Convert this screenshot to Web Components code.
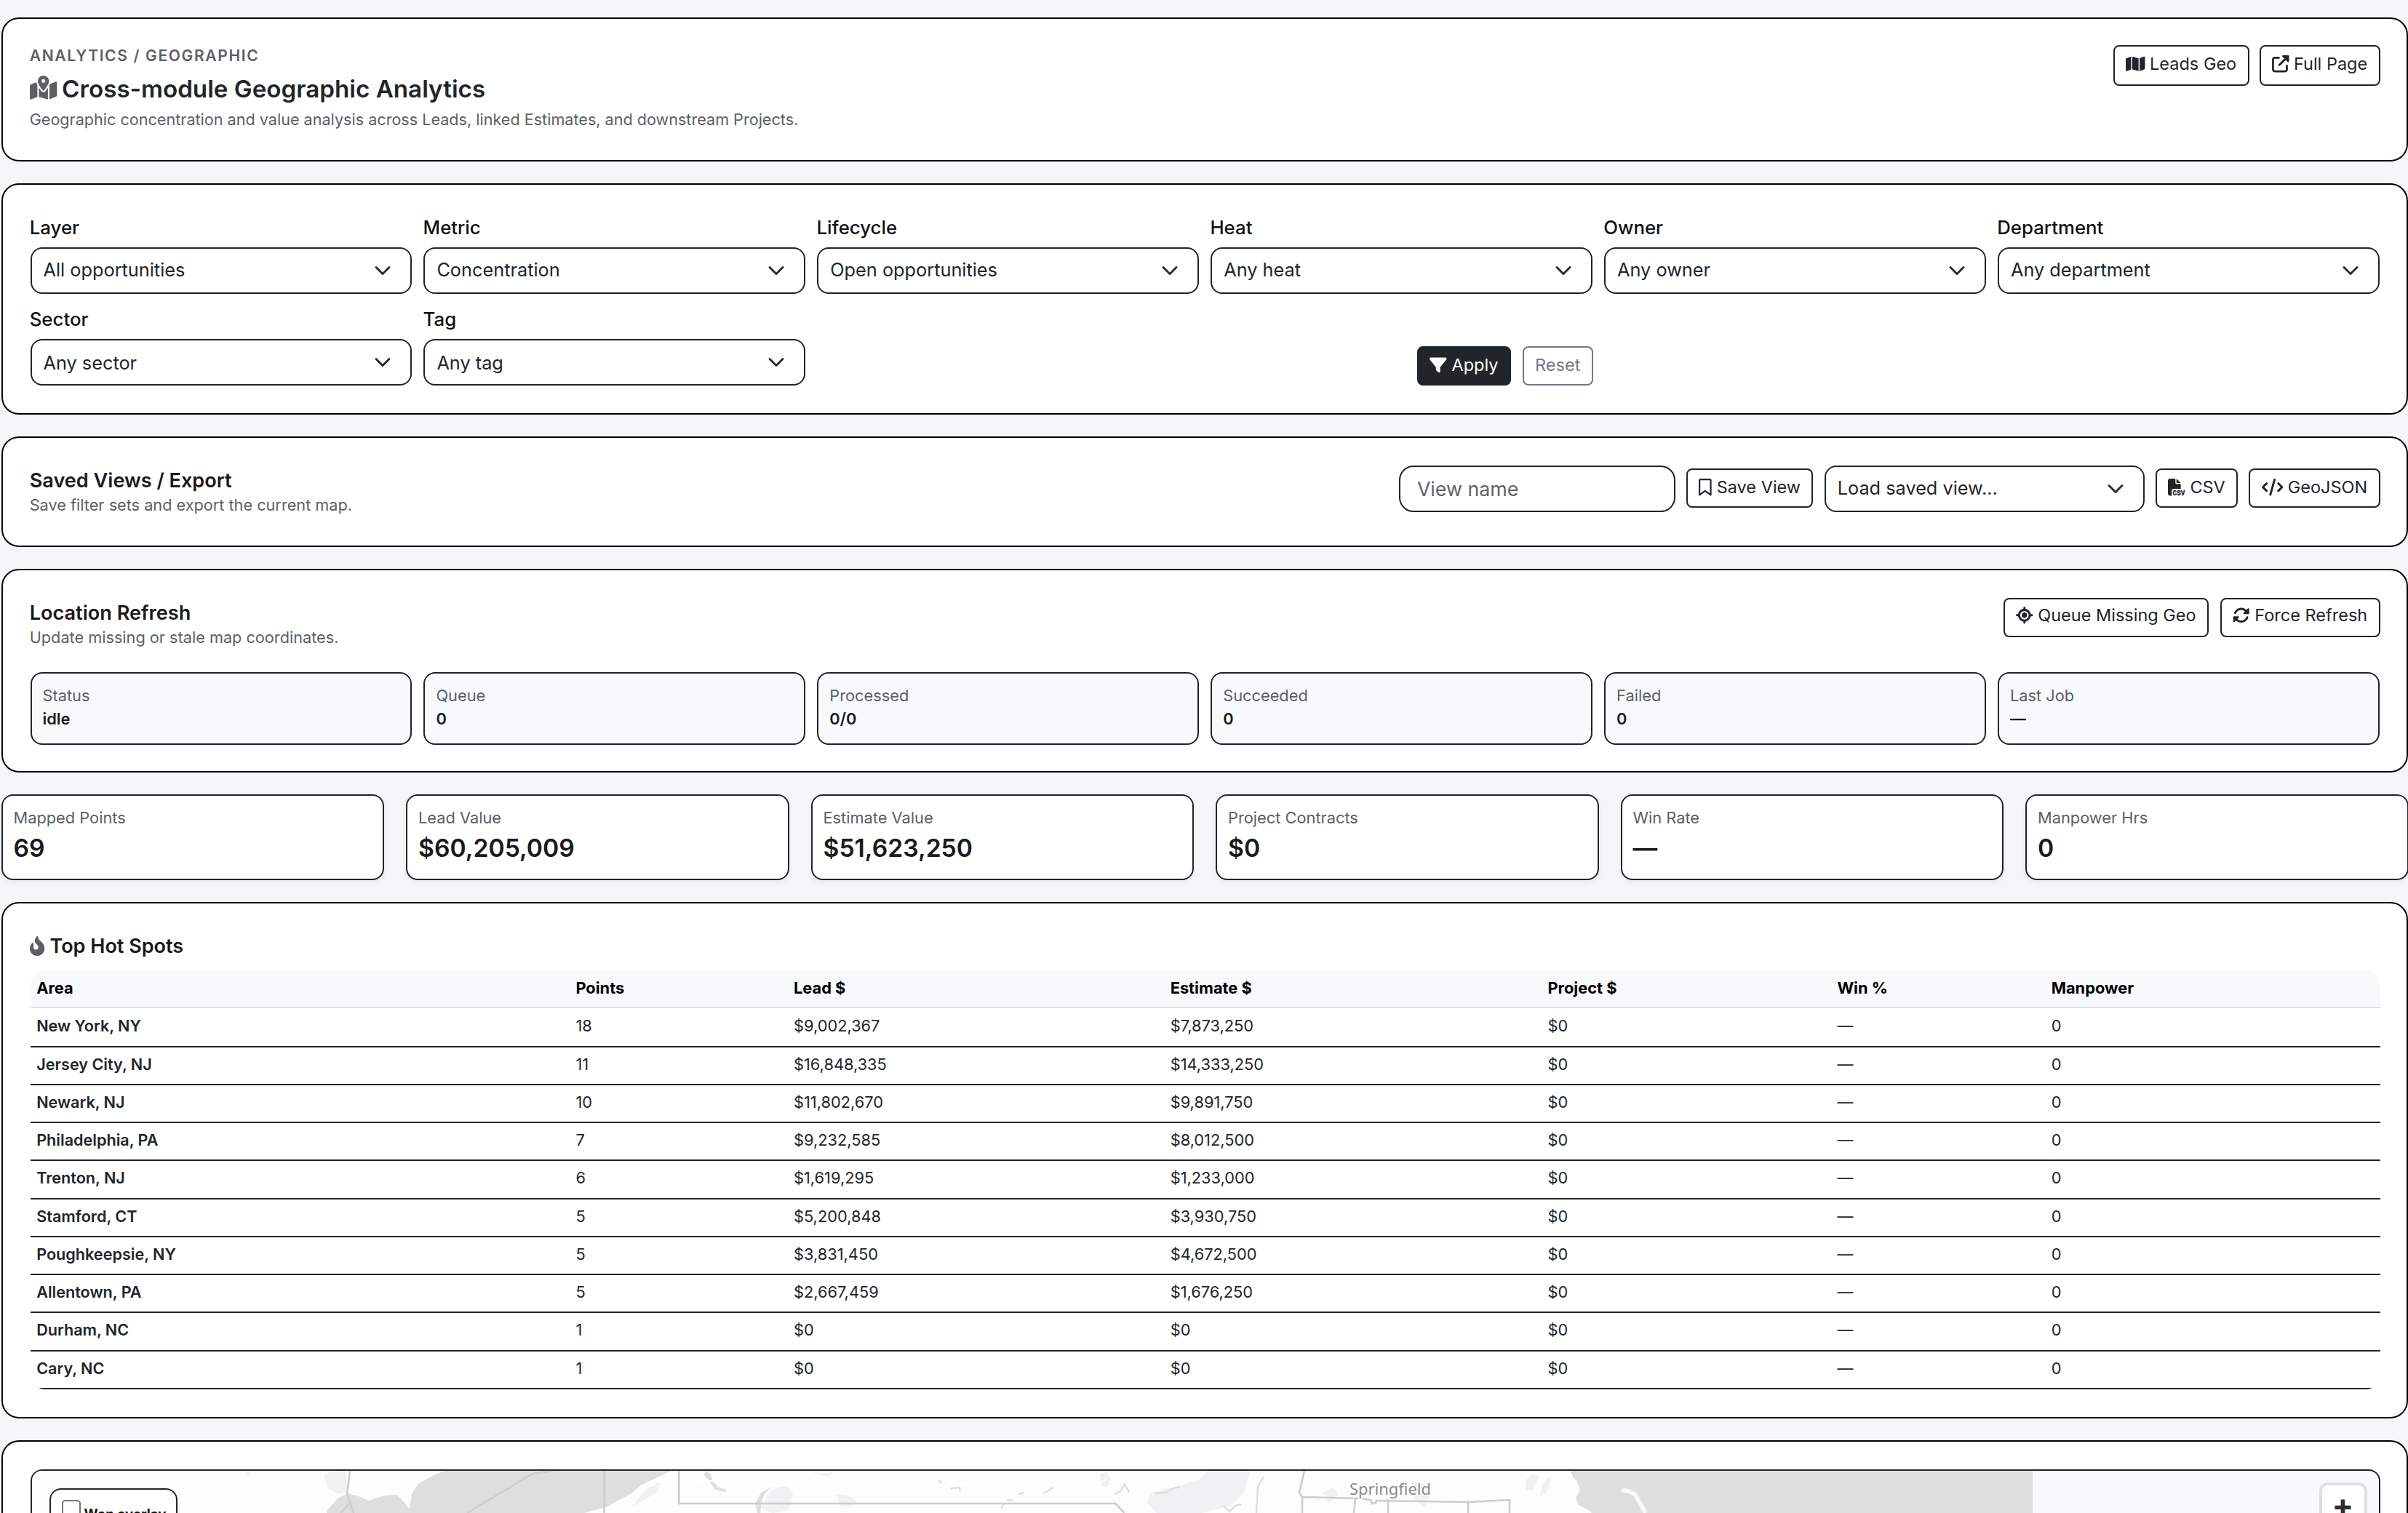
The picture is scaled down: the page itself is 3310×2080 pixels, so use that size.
<!DOCTYPE html>
<html lang="en">
<head>
<meta charset="utf-8">
<title>Cross-module Geographic Analytics</title>
<style>
  html, body {
    height: 2080px;
    margin: 0;
    overflow: hidden;
  }
  body {
    background: #f5f6f8;
    color: #212529;
    font-family: Inter, "Liberation Sans", sans-serif;
  }
</style>
</head>
<body>
<geo-page></geo-page>

<script>
const ICONS = {
    'map-dot': [576, '<path d="M408 120c0 54.6-73.1 151.9-105.2 192c-7.7 9.6-22 9.6-29.6 0C241.1 271.9 168 174.6 168 120C168 53.7 221.7 0 288 0s120 53.7 120 120zm8 80.4c3.5-6.9 6.7-13.8 9.6-20.6c.5-1.2 1-2.5 1.5-3.7l116-46.4C558.9 123.4 576 135 576 152V422.8c0 9.8-6 18.6-15.1 22.3L416 503V200.4zM137.6 138.3c2.4 14.1 7.2 28.3 12.8 41.5c2.9 6.8 6.1 13.7 9.6 20.6V451.8L32.9 502.7C17.1 509 0 497.4 0 480.4V209.6c0-9.8 6-18.6 15.1-22.3l122.6-49zM327.8 332c13.9-17.4 35.7-45.7 56.2-77V504.3L192 449.4V255c20.5 31.3 42.3 59.6 56.2 77c20.5 25.6 59.1 25.6 79.6 0zM288 152a40 40 0 1 0 0-80 40 40 0 1 0 0 80z"/>'],
    'map': [576, '<path d="M384 476.1L192 421.2V35.9L384 90.8V476.1zm32-1.2V88.4L543.1 37.5c15.8-6.3 32.9 5.3 32.9 22.3V394.6c0 9.8-6 18.6-15.1 22.3L416 474.8zM15.1 95.1L160 37.2V423.6L32.9 474.5C17.1 480.8 0 469.2 0 452.2V117.4c0-9.8 6-18.6 15.1-22.3z"/>'],
    'external': [512, '<g fill="none" stroke="currentColor" stroke-linecap="round"><path stroke-width="60" d="M206 76H90a58 58 0 0 0-58 58V422a58 58 0 0 0 58 58H388a58 58 0 0 0 58-58V310"/><path stroke-width="66" d="M222 288L420 92"/></g><path d="M330 0H488a24 24 0 0 1 24 24V182c0 21-26 32-41 17L313 41C298 26 309 0 330 0z"/>'],
    'filter': [512, '<path d="M3.9 54.9C10.5 40.9 24.5 32 40 32H472c15.5 0 29.5 8.9 36.1 22.9s4.6 30.5-5.2 42.5L320 320.9V448c0 12.1-6.8 23.2-17.7 28.6s-23.8 4.3-33.5-3l-64-48c-8.1-6-12.8-15.5-12.8-25.6V320.9L9 97.3C-.7 85.4-2.8 68.8 3.9 54.9z"/>'],
    'bookmark': [384, '<path d="M0 48C0 21.5 21.5 0 48 0l0 48V441.4l130.1-92.9c8.3-6 19.6-6 27.9 0L336 441.4V48H48V0H336c26.5 0 48 21.5 48 48V488c0 9-5 17.2-13 21.3s-17.6 3.4-24.9-1.8L192 397.5 37.9 507.5c-7.3 5.2-16.9 5.9-24.9 1.8S0 497 0 488V48z"/>'],
    'csv': [512, '<path d="M0 64C0 28.7 28.7 0 64 0H224V128c0 17.7 14.3 32 32 32H384V304H176c-35.3 0-64 28.7-64 64V512H64c-35.3 0-64-28.7-64-64V64zm384 64H256V0L384 128z"/><text x="144" y="508" font-family="Liberation Mono, monospace" font-weight="700" font-size="220" textLength="366" lengthAdjust="spacingAndGlyphs" stroke="currentColor" stroke-width="8">CSV</text>'],
    'code': [640, '<path d="M392.8 1.2c-17-4.9-34.7 5-39.6 22l-128 448c-4.9 17 5 34.7 22 39.6s34.7-5 39.6-22l128-448c4.9-17-5-34.7-22-39.6zm80.6 120.1c-12.5 12.5-12.5 32.8 0 45.3L562.7 256l-89.4 89.4c-12.5 12.5-12.5 32.8 0 45.3s32.8 12.5 45.3 0l112-112c12.5-12.5 12.5-32.8 0-45.3l-112-112c-12.5-12.5-32.8-12.5-45.3 0zm-306.7 0c-12.5-12.5-32.8-12.5-45.3 0l-112 112c-12.5 12.5-12.5 32.8 0 45.3l112 112c12.5 12.5 32.8 12.5 45.3 0s12.5-32.8 0-45.3L77.3 256l89.4-89.4c12.5-12.5 12.5-32.8 0-45.3z"/>'],
    'crosshairs': [512, '<path d="M256 0c17.7 0 32 14.3 32 32V66.7C368.4 80.1 431.9 143.6 445.3 224H480c17.7 0 32 14.3 32 32s-14.3 32-32 32H445.3C431.9 368.4 368.4 431.9 288 445.3V480c0 17.7-14.3 32-32 32s-32-14.3-32-32V445.3C143.6 431.9 80.1 368.4 66.7 288H32c-17.7 0-32-14.3-32-32s14.3-32 32-32H66.7C80.1 143.6 143.6 80.1 224 66.7V32c0-17.7 14.3-32 32-32zM128 256a128 128 0 1 0 256 0 128 128 0 1 0-256 0zm128-80a80 80 0 1 1 0 160 80 80 0 1 1 0-160z"/>'],
    'rotate': [512, '<path d="M142.9 142.9c62.2-62.2 162.7-62.5 225.3-1L327 183c-6.9 6.9-8.9 17.2-5.2 26.2s12.5 14.8 22.2 14.8H463.5H472c13.3 0 24-10.7 24-24V72c0-9.7-5.8-18.5-14.8-22.2s-19.3-1.7-26.2 5.2L413.4 96.6c-87.6-86.5-228.7-86.2-315.8 1C73.2 122 55.6 150.7 44.8 181.4c-5.9 16.7 2.9 34.9 19.5 40.8s34.9-2.9 40.8-19.5c7.7-21.8 20.2-42.3 37.8-59.8zM16 312v7.6.7V440c0 9.7 5.8 18.5 14.8 22.2s19.3 1.7 26.2-5.2l41.6-41.6c87.6 86.5 228.7 86.2 315.8-1c24.4-24.4 42.1-53.1 52.9-83.7c5.9-16.7-2.9-34.9-19.5-40.8s-34.9 2.9-40.8 19.5c-7.7 21.8-20.2 42.3-37.8 59.8c-62.2 62.2-162.7 62.5-225.3 1L185 329c6.9-6.9 8.9-17.2 5.2-26.2s-12.5-14.8-22.2-14.8H48.4h-.7H40c-13.3 0-24 10.7-24 24z"/>'],
    'fire': [384, '<path d="M216 23.86c0-23.8-30.65-32.77-44.15-13.04C48 191.85 224 200 224 288c0 35.63-29.11 64.46-64.85 63.99-35.17-.45-63.15-29.77-63.15-64.94v-85.51c0-21.7-26.47-32.23-41.43-16.5C27.8 213.16 0 261.33 0 320c0 105.87 86.13 192 192 192s192-86.13 192-192c0-170.29-168-193-168-296.14z"/>']
};

class GeoIcon extends HTMLElement {
    connectedCallback() {
        const [width, shapes] = ICONS[this.getAttribute('name')];
        this.attachShadow({ mode: 'open' }).innerHTML = `
          <style>
              :host { display: inline-block; flex: none; height: 1em; }
              svg { display: block; height: 1em; width: ${width / 512}em; overflow: visible; }
          </style>
          <svg viewBox="0 0 ${width} 512" fill="currentColor" aria-hidden="true">${shapes}</svg>
        `;
    }
}

class GeoPanel extends HTMLElement {
    constructor() {
        super();
        this.attachShadow({ mode: 'open' }).innerHTML = `
          <style>
              :host {
                background: #fff;
                border: 2px solid #000;
                border-radius: 24px;
                box-sizing: border-box;
                display: block;
                padding: 38px 36.9px 38px 38px;
              }
          </style>
          <slot></slot>
        `;
    }
}

class GeoHeading extends HTMLElement {
    constructor() {
        super();
        this.attachShadow({ mode: 'open' }).innerHTML = `
          <style>
              :host { display: block; margin-left: -0.8px; padding-top: 4px; }
              .title {
                color: #1a1a1a;
                font-size: 27.1px;
                font-weight: 600;
                line-height: 34px;
              }
              .note {
                color: #5c6064;
                font-size: 21.7px;
                line-height: 33px;
              }
          </style>
          <div class="title"><slot></slot></div>
          <div class="note"><slot name="note"></slot></div>
        `;
    }
}

class GeoButton extends HTMLElement {
    connectedCallback() {
        const icon = this.getAttribute('icon');
        this.attachShadow({ mode: 'open' }).innerHTML = `
          <style>
              :host { display: block; flex: none; }
              button {
                align-items: center;
                background: #fff;
                border: 2px solid #212529;
                border-radius: 8px;
                box-sizing: border-box;
                color: #212529;
                display: flex;
                font: 400 23.5px Inter, "Liberation Sans", sans-serif;
                gap: 6.6px;
                height: var(--button-height, 54px);
                line-height: 30px;
                margin: 0;
                padding: 0 15.3px var(--button-lift, 3px);
                white-space: nowrap;
              }
              :host([variant="dark"]) button { background: #212529; color: #fff; }
              :host([variant="muted"]) button { border-color: #75758f; color: #75758f; }
          </style>
          <button type="button">${icon ? `<geo-icon name="${icon}"></geo-icon>` : ''}<span><slot></slot></span></button>
        `;
    }
}

class GeoSelect extends HTMLElement {
    constructor() {
        super();
        this.attachShadow({ mode: 'open' }).innerHTML = `
          <style>
              :host {
                align-items: center;
                background: #fff;
                border: 2px solid #212529;
                border-radius: 16px;
                box-sizing: border-box;
                display: flex;
                font-size: 25.3px;
                height: 64px;
                justify-content: space-between;
                padding: 0 26px 0 16px;
              }
              span {
                line-height: 34px;
                padding: var(--select-shift, 0 0 3px);
              }
              svg { height: 24px; width: 24px; }
          </style>
          <span><slot></slot></span>
          <svg viewBox="0 0 16 16" fill="none" stroke="#262c40" stroke-width="2" stroke-linecap="round" stroke-linejoin="round"><path d="M2 5l6 6 6-6"/></svg>
        `;
    }
}

class GeoField extends HTMLElement {
    connectedCallback() {
        this.attachShadow({ mode: 'open' }).innerHTML = `
          <style>
              :host { display: block; }
              label {
                color: #111;
                display: block;
                font-size: 25.8px;
                font-weight: 500;
                line-height: 42px;
                margin: 0 0 6px -0.8px;
              }
          </style>
          <label>${this.getAttribute('label')}</label>
          <geo-select><slot></slot></geo-select>
        `;
    }
}

class GeoStat extends HTMLElement {
    connectedCallback() {
        this.attachShadow({ mode: 'open' }).innerHTML = `
          <style>
              :host {
                background: #f8f9fb;
                border: 2px solid #212529;
                border-radius: 16px;
                box-sizing: border-box;
                display: block;
                height: 100px;
                padding: 14px 14px 14px 15px;
              }
              .label {
                color: #5c6064;
                font-size: 21.8px;
                line-height: 32px;
              }
              .value {
                color: #1a1a1a;
                font-size: 21.8px;
                font-weight: 600;
                line-height: 32px;
              }
              :host([large]) {
                background: #fff;
                box-shadow: 0 4px 8px rgba(0, 0, 0, .05);
                height: 118px;
              }
              :host([large]) .value { font-size: 33.7px; line-height: 52px; }
          </style>
          <div class="label">${this.getAttribute('label')}</div>
          <div class="value"><slot></slot></div>
        `;
    }
}

const HOT_SPOTS = [
    ['New York, NY', '18', '$9,002,367', '$7,873,250'],
    ['Jersey City, NJ', '11', '$16,848,335', '$14,333,250'],
    ['Newark, NJ', '10', '$11,802,670', '$9,891,750'],
    ['Philadelphia, PA', '7', '$9,232,585', '$8,012,500'],
    ['Trenton, NJ', '6', '$1,619,295', '$1,233,000'],
    ['Stamford, CT', '5', '$5,200,848', '$3,930,750'],
    ['Poughkeepsie, NY', '5', '$3,831,450', '$4,672,500'],
    ['Allentown, PA', '5', '$2,667,459', '$1,676,250'],
    ['Durham, NC', '1', '$0', '$0'],
    ['Cary, NC', '1', '$0', '$0']
];

class GeoTable extends HTMLElement {
    constructor() {
        super();
        const cells = (list, role) => list.map(text => `<div role="${role}">${text}</div>`).join('');
        const head = ['Area', 'Points', 'Lead $', 'Estimate $', 'Project $', 'Win %', 'Manpower'];

        this.attachShadow({ mode: 'open' }).innerHTML = `
          <style>
              :host {
                border-radius: 20px;
                display: block;
                font-size: 21.8px;
                height: 576px;
                overflow: hidden;
              }
              .row {
                border-bottom: 2px solid #212529;
                box-sizing: border-box;
                display: grid;
                grid-template-columns: 741.2px 299.6px 517.7px 518.8px 398px 294.2px 1fr;
                height: 52.25px;
                line-height: 46.8px;
              }
              .row > div { padding-left: 8.7px; }
              .row > div:first-child { font-size: 21.6px; font-weight: 600; }
              .head {
                background: #f8f9fb;
                border-color: #dee2e6;
                color: #000;
                height: 52px;
                line-height: 48px;
                margin-bottom: 1.4px;
              }
              .head > div, .head > div:first-child { font-size: 21.8px; font-weight: 700; }
          </style>
          <div role="table">
            <div class="row head" role="row">${cells(head, 'columnheader')}</div>
            ${HOT_SPOTS.map(spot => `<div class="row" role="row">${cells([...spot, '$0', '—', '0'], 'cell')}</div>`).join('')}
          </div>
        `;
    }
}

class GeoMap extends HTMLElement {
    constructor() {
        super();
        this.attachShadow({ mode: 'open' }).innerHTML = `
          <style>
              :host {
                background: #f8f9fb;
                border: 2px solid #212529;
                border-bottom: 0;
                border-radius: 16px 16px 0 0;
                box-sizing: border-box;
                display: block;
                height: 60px;
                overflow: hidden;
                position: relative;
              }
              .tiles { display: block; height: 58px; width: 2750px; }
              .overlay {
                align-items: flex-start;
                background: #fff;
                border: 2px solid #212529;
                border-bottom: 0;
                border-radius: 16px 16px 0 0;
                bottom: 0;
                box-sizing: border-box;
                color: #111;
                display: flex;
                font-size: 18.5px;
                font-weight: 700;
                gap: 4.6px;
                left: 24.5px;
                line-height: 22px;
                padding: 14px 14px 0 15px;
                position: absolute;
                top: 24px;
                white-space: nowrap;
                width: 176px;
              }
              .overlay span { padding-top: 8px; }
              .check {
                border: 2px solid #767676;
                border-radius: 5px;
                box-sizing: border-box;
                flex: none;
                height: 26px;
                width: 26px;
              }
              .zoom {
                background: #fff;
                background-clip: padding-box;
                border: 4px solid rgba(0, 0, 0, .1);
                border-bottom: 0;
                border-radius: 12px 12px 0 0;
                bottom: 0;
                box-sizing: border-box;
                color: #2e2e2e;
                font-size: 44px;
                font-weight: 700;
                line-height: 54px;
                position: absolute;
                right: 16px;
                text-align: center;
                top: 16px;
                width: 66px;
              }
          </style>
          <svg class="tiles" viewBox="44 2022 2750 58">
            <rect x="44" y="2022" width="2750" height="58" fill="#fdfdfd"/>
            <!-- lakes and ocean -->
            <g fill="#dedede">
              <path d="M611 2022L596 2028 575 2040 566 2053 563 2075 557 2067 546 2055 528 2056 507 2063 493 2057 478 2053 464 2060 451 2075 449 2080H803L836 2071 851 2062 868 2053 882 2041 900 2033 912 2027 924 2022z"/>
              <path d="M2159 2022L2162 2030 2168 2037 2172 2048 2166 2060 2170 2069 2184 2076 2188 2080H2794V2022z"/>
              <path d="M969 2022l7 4 4 10 8 9 11 3-2 3-14-3-8-12-7-8zM1062 2044l-16 8-8 15 3 13h4l2-15 4-12z"/>
            </g>
            <g fill="#f1f1f3">
              <path d="M445 2028l10-6h20l2 30-12 2-14-8-4-10z"/>
              <path d="M1660 2022h58l-8 30-18 18-40 10h-62l-14-14 6-14 40-10 26-8z"/>
              <path d="M1060 2048l22-6 8 12-6 22-22 4-16-6 8-16zM338 2022l8 2-3 6-6-3zM1512 2026l10-3 4 10-4 12-9-3zM1150 2054l16 2 12 8-8 8-16-2zM1118 2026l30-4-10 8zM2098 2034l10-8 8 4-8 18-12 2zM2120 2042l8-12 4 2-6 20-10 6zM1940 2036l16 4 10 14-8 18-14-10zM1818 2052l14-8 8 10-14 12zM890 2046l18-9-4 14-34 20 4-8z"/>
            </g>
            <g fill="none" stroke="#dedede" stroke-width="2.5">
              <path d="M1737 2030l-8 14-2 36M1290 2035l4 4M1307 2046l12-1 1 5M1400 2054l8-2M1434 2053l14-8M1532 2054l8-4 6-10 6 12M1588 2053l14-1 12-6 8-2M1682 2070l8 8 8-8 8-2M1376 2074l4-6M1384 2062l8 1"/>
            </g>
            <!-- highways -->
            <g fill="none" stroke="#fff" stroke-width="2">
              <path d="M860 2080l30-42 90-2 140 10M1115 2040l10-14 24-4M1284 2022l10 58M1300 2044l34-6 12 42M1460 2022v26l30 4 30-18M1840 2070l60-30M2010 2022v58"/>
            </g>
            <!-- state and province lines -->
            <g fill="none" stroke="#cdcdcd" stroke-width="2.6">
              <path d="M481 2022l-4 31 9 27M480 2067l-12 13M760 2022l-28 4-90 54M830.500 2022v58M933.500 2022v45h600l12 13"/>
              <path d="M1793 2022l-7 30 4 6v22M1790 2058l80 2 14 2 2 5 5-1 1-3 126 2 57-3v20M1863 2060l-2 20M1908 2061v19M2018 2063v17"/>
            </g>
            <path d="M2229 2048l10 2 8 4 7 12 8 14" fill="none" stroke="#f8f8f8" stroke-width="6"/>
            <text x="1855" y="2055" font-family="Noto Sans, sans-serif" font-size="22" textLength="112" lengthAdjust="spacingAndGlyphs" fill="#8c8c8c" stroke="#fdfdfd" stroke-width="3" paint-order="stroke">Springfield</text>
          </svg>
          <div class="overlay"><div class="check"></div><span>Won overlay</span></div>
          <div class="zoom">+</div>
        `;
    }
}

class GeoPage extends HTMLElement {
    constructor() {
        super();
        this.attachShadow({ mode: 'open' }).innerHTML = `
          <style>
              :host {
                box-sizing: border-box;
                display: flex;
                flex-direction: column;
                gap: 30px;
                height: 2080px;
                overflow: hidden;
                padding: 24px 0 0 1.5px;
                width: 3310.4px;
              }
              geo-panel, .metrics { flex: none; }
              .bar {
                display: flex;
                justify-content: space-between;
                align-items: flex-start;
              }
              .actions {
                align-items: center;
                display: flex;
                gap: 15.3px;
              }
              .intro {
                --button-height: 56px;
                --button-lift: 5px;
                height: 198px;
                padding-top: 36px;
              }
              .intro .actions { gap: 14px; }
              .intro .text { margin-left: -0.8px; }
              .eyebrow {
                color: #5c6064;
                font-size: 21px;
                font-weight: 600;
                letter-spacing: 1.65px;
                line-height: 29px;
              }
              h1 {
                align-items: center;
                display: flex;
                font-size: 33.2px;
                font-weight: 600;
                gap: 7px;
                line-height: 50px;
                margin: 6px 0 1px;
              }
              h1 geo-icon { color: #5c6064; margin-bottom: 2px; }
              .lead {
                color: #5c6064;
                font-size: 21.6px;
                line-height: 32px;
              }
              .filters { height: 318px; }
              .grid {
                column-gap: 16.1px;
                display: grid;
                grid-template-columns: repeat(6, 524.8px);
                row-gap: 14px;
              }
              .lower { --select-shift: 1.5px 0 0; }
              .submit {
                align-items: flex-end;
                display: flex;
                gap: 16px;
                grid-column: 3 / span 2;
                justify-content: flex-end;
                margin-right: -0.7px;
              }
              .saved { height: 152px; }
              .saved geo-button { margin-bottom: 2px; }
              .name {
                border: 2px solid #212529;
                border-radius: 20px;
                box-sizing: border-box;
                color: #5f6368;
                font-size: 26.8px;
                height: 64px;
                line-height: 60px;
                padding-left: 23px;
                width: 380px;
              }
              .saved geo-select { width: 440px; }
              .refresh {
                --button-lift: 7px;
                height: 280px;
              }
              .refresh .actions { gap: 16px; }
              .refresh .grid { margin-top: 31px; }
              .metrics {
                column-gap: 30px;
                display: grid;
                grid-template-columns: repeat(6, 526.5px);
              }
              .spots { height: 710px; }
              h2 {
                align-items: center;
                color: #1a1a1a;
                display: flex;
                font-size: 27px;
                font-weight: 600;
                gap: 7.5px;
                line-height: 42px;
                margin: 0 0 12px -0.8px;
              }
              h2 geo-icon { color: #5c6064; margin-bottom: 2px; }
              .map {
                border-bottom: 0;
                border-radius: 24px 24px 0 0;
                padding-bottom: 0;
              }
          </style>

          <geo-panel class="intro">
            <div class="bar">
              <div class="text">
                <div class="eyebrow">ANALYTICS / GEOGRAPHIC</div>
                <h1><geo-icon name="map-dot"></geo-icon>Cross-module Geographic Analytics</h1>
                <div class="lead">Geographic concentration and value analysis across Leads, linked Estimates, and downstream Projects.</div>
              </div>
              <div class="actions">
                <geo-button icon="map">Leads Geo</geo-button>
                <geo-button icon="external">Full Page</geo-button>
              </div>
            </div>
          </geo-panel>

          <geo-panel class="filters">
            <div class="grid">
              <geo-field label="Layer">All opportunities</geo-field>
              <geo-field label="Metric">Concentration</geo-field>
              <geo-field label="Lifecycle">Open opportunities</geo-field>
              <geo-field label="Heat">Any heat</geo-field>
              <geo-field label="Owner">Any owner</geo-field>
              <geo-field label="Department">Any department</geo-field>
              <geo-field class="lower" label="Sector">Any sector</geo-field>
              <geo-field class="lower" label="Tag">Any tag</geo-field>
              <div class="submit">
                <geo-button variant="dark" icon="filter">Apply</geo-button>
                <geo-button variant="muted">Reset</geo-button>
              </div>
            </div>
          </geo-panel>

          <geo-panel class="saved">
            <div class="bar">
              <geo-heading>Saved Views / Export<span slot="note">Save filter sets and export the current map.</span></geo-heading>
              <div class="actions">
                <div class="name">View name</div>
                <geo-button icon="bookmark">Save View</geo-button>
                <geo-select>Load saved view...</geo-select>
                <geo-button icon="csv">CSV</geo-button>
                <geo-button icon="code">GeoJSON</geo-button>
              </div>
            </div>
          </geo-panel>

          <geo-panel class="refresh">
            <div class="bar">
              <geo-heading>Location Refresh<span slot="note">Update missing or stale map coordinates.</span></geo-heading>
              <div class="actions">
                <geo-button icon="crosshairs">Queue Missing Geo</geo-button>
                <geo-button icon="rotate">Force Refresh</geo-button>
              </div>
            </div>
            <div class="grid">
              <geo-stat label="Status">idle</geo-stat>
              <geo-stat label="Queue">0</geo-stat>
              <geo-stat label="Processed">0/0</geo-stat>
              <geo-stat label="Succeeded">0</geo-stat>
              <geo-stat label="Failed">0</geo-stat>
              <geo-stat label="Last Job">—</geo-stat>
            </div>
          </geo-panel>

          <div class="metrics">
            <geo-stat large label="Mapped Points">69</geo-stat>
            <geo-stat large label="Lead Value">$60,205,009</geo-stat>
            <geo-stat large label="Estimate Value">$51,623,250</geo-stat>
            <geo-stat large label="Project Contracts">$0</geo-stat>
            <geo-stat large label="Win Rate">—</geo-stat>
            <geo-stat large label="Manpower Hrs">0</geo-stat>
          </div>

          <geo-panel class="spots">
            <h2><geo-icon name="fire"></geo-icon>Top Hot Spots</h2>
            <geo-table></geo-table>
          </geo-panel>

          <geo-panel class="map">
            <geo-map></geo-map>
          </geo-panel>
        `;
    }
}

customElements.define('geo-icon', GeoIcon);
customElements.define('geo-panel', GeoPanel);
customElements.define('geo-heading', GeoHeading);
customElements.define('geo-button', GeoButton);
customElements.define('geo-select', GeoSelect);
customElements.define('geo-field', GeoField);
customElements.define('geo-stat', GeoStat);
customElements.define('geo-table', GeoTable);
customElements.define('geo-map', GeoMap);
customElements.define('geo-page', GeoPage);
</script>
</body>
</html>
